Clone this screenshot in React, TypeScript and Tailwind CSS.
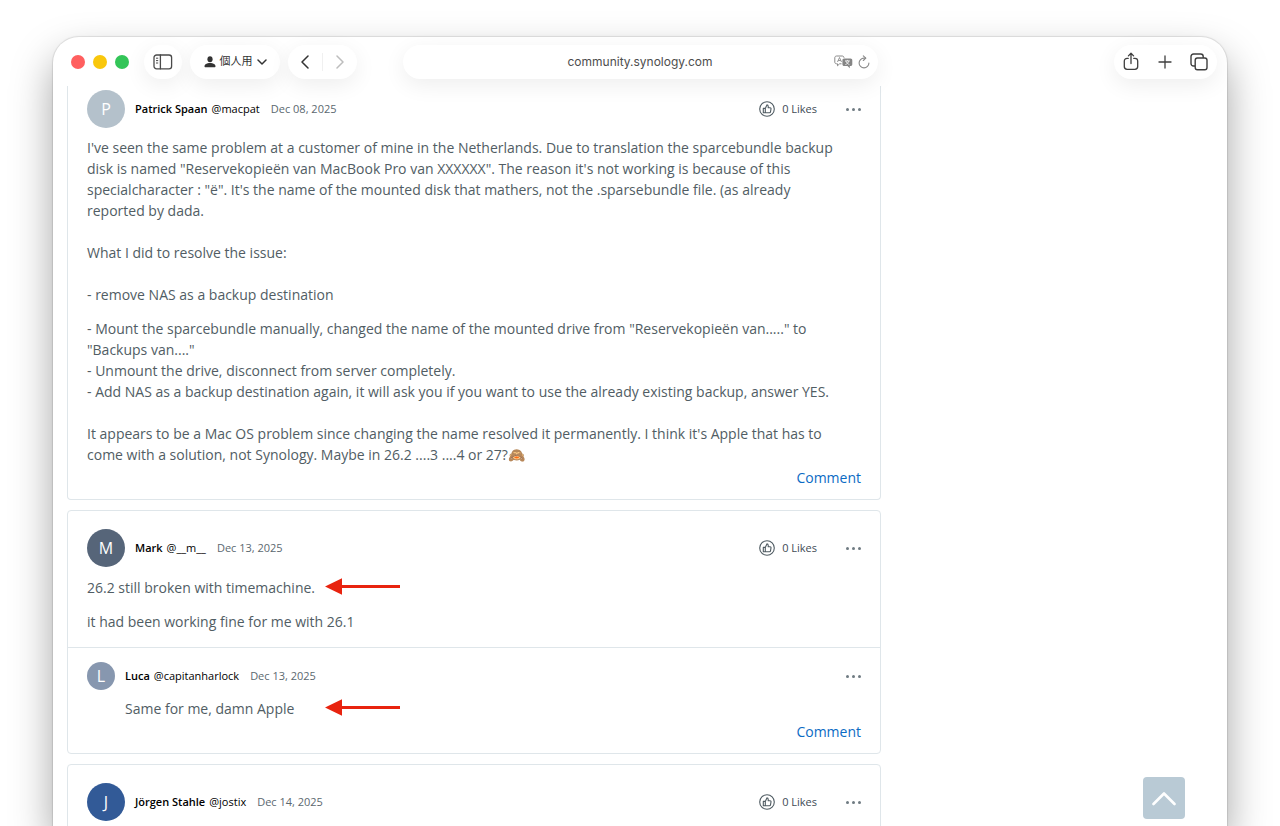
import React from 'react';

const PILL = 'flex items-center h-[34px] rounded-full bg-white shadow-[0_6px_22px_rgba(0,0,0,0.07)]';

const SidebarIcon: React.FC = () => (
    <svg width="20" height="16" viewBox="0 0 20 16" fill="none" stroke="#4a4a4a" strokeWidth="1.3" strokeLinecap="round">
        <rect x="1" y="1" width="17.6" height="13.8" rx="2.6" />
        <path d="M7.4 1v13.8" />
        <path d="M3.4 4.2h1.4M3.4 6.6h1.4M3.4 9h1.4" strokeWidth="1" />
    </svg>
);

const PersonIcon: React.FC = () => (
    <svg width="12" height="12" viewBox="0 0 12 12" fill="#333">
        <ellipse cx="6" cy="3.2" rx="2.6" ry="3" />
        <path d="M.5 10.2C.5 8.3 3 7 6 7s5.5 1.3 5.5 3.2c0 .7-.4 1-1 1h-9c-.6 0-1-.3-1-1z" />
    </svg>
);

const ChevronIcon: React.FC<{ d: string; className?: string; width: number; height: number; strokeWidth?: number }> = ({ d, className, width, height, strokeWidth = 1.5 }) => (
    <svg width={width} height={height} viewBox={`0 0 ${width} ${height}`} className={className} fill="none" stroke="currentColor" strokeWidth={strokeWidth} strokeLinecap="round" strokeLinejoin="round">
        <path d={d} />
    </svg>
);

const TranslateIcon: React.FC = () => (
    <svg width="19" height="14" viewBox="0 0 19 14" fill="none">
        <path d="M7.5 8.8H5.6L3.5 10.800V8.800H2.6C1.5 8.8.8 8.1.8 7V2.800C.8 1.700 1.5 1 2.6 1h5.600c1.100 0 1.800.7 1.800 1.800" stroke="#8a8a8a" strokeWidth="1" strokeLinejoin="round" />
        <path d="M3.500 7l2-4.500 2 4.500M4.200 5.500h2.600" stroke="#8a8a8a" strokeWidth=".9" />
        <path d="M10.200 3.600h6.300c1.100 0 1.800.7 1.800 1.800v3.800c0 1.100-.7 1.800-1.800 1.800h-.7v2.200L13.500 11h-3.300c-1.100 0-1.800-.7-1.800-1.800V5.400c0-1.100.7-1.800 1.800-1.800z" fill="#858585" />
        <path d="M11 5.900h4.800M13.400 4.900v1M14.900 6c-.5 1.600-1.800 2.900-3.500 3.600M11.900 6c.5 1.600 1.800 2.900 3.500 3.600" stroke="#fff" strokeWidth=".8" />
    </svg>
);

const ReloadIcon: React.FC = () => (
    <svg width="12" height="14" viewBox="0 0 12 14" fill="none" stroke="#8a8a8a" strokeWidth="1.1" strokeLinecap="round" strokeLinejoin="round">
        <path d="M7.600 3.100H6A4.900 4.900 0 1 0 10.900 8" />
        <path d="M5.300 .8l2.500 2.300-2.500 2.400" />
    </svg>
);

const ShareIcon: React.FC = () => (
    <svg width="16" height="19" viewBox="0 0 16 19" fill="none" stroke="#3f3f3f" strokeWidth="1.3" strokeLinecap="round" strokeLinejoin="round">
        <path d="M5.200 6.400H4.100C2.400 6.400 1.300 7.500 1.300 9.200v5.400c0 1.700 1.100 2.800 2.800 2.800h7.800c1.700 0 2.800-1.100 2.800-2.800V9.200c0-1.700-1.100-2.800-2.800-2.800h-1.100" />
        <path d="M8 11.500V1.500M5.400 3.900L8 1.300l2.600 2.600" />
    </svg>
);

const PlusIcon: React.FC = () => (
    <svg width="14" height="14" viewBox="0 0 14 14" fill="none" stroke="#3f3f3f" strokeWidth="1.3" strokeLinecap="round">
        <path d="M7 1v12M1 7h12" />
    </svg>
);

const TabsIcon: React.FC = () => (
    <svg width="18" height="18" viewBox="0 0 18 18" fill="none" stroke="#3f3f3f" strokeWidth="1.4" strokeLinejoin="round">
        <rect x="5.200" y="5" width="11.800" height="11.800" rx="2.200" />
        <path d="M5 13H3.600C2 13 1 12 1 10.400V3.600C1 2 2 1 3.600 1h7C12.200 1 13.200 2 13.200 3.600V5" />
    </svg>
);

const ThumbIcon: React.FC = () => (
    <svg width="16" height="16" viewBox="0 0 16 16" fill="none" stroke="#4f5b62" strokeWidth="1.1" strokeLinejoin="round">
        <circle cx="8" cy="8" r="7.3" />
        <path d="M4.300 7.400h2v4.300h-2zM6.300 7.400l1.600-3.500c.9 0 1.300.5 1.300 1.300v1.600h2c.6 0 .9.4.8 1l-.5 3c-.1.600-.5.900-1 .9H6.300" />
    </svg>
);

const Arrow: React.FC<{ className: string }> = ({ className }) => (
    <svg width="75" height="17" viewBox="0 0 75 17" className={`absolute top-px ${className}`} fill="#e8230f" aria-hidden="true">
        <path d="M0 8.500L17 .2v6.900h58v2.800H17v6.900z" />
    </svg>
);

interface PostHeaderProps {
    initial: string;
    color: string;
    name: string;
    handle: string;
    date: string;
    reply?: boolean;
}

const PostHeader: React.FC<PostHeaderProps> = ({ initial, color, name, handle, date, reply }) => (
    <div className="flex items-center text-[11px] leading-4">
        <div className={`flex shrink-0 items-center justify-center rounded-full text-white ${color} ${reply ? 'size-7' : 'size-[38px]'} text-base`}>
            {initial}
        </div>
        <div className="ml-[10px] flex text-black">
            <span className="font-semibold">{name}</span>
            <span className="ml-1">{handle}</span>
            <time className="ml-[11px] text-[#5b686f]">{date}</time>
        </div>
        <div className="ml-auto flex items-center gap-[29px]">
            {!reply && (
                <button className="flex items-center gap-[7px] text-[#414b55]">
                    <ThumbIcon />
                    0 Likes
                </button>
            )}
            <button aria-label="More" className="flex gap-[3px]">
                <span className="size-[3px] rounded-full bg-[#6f7b82]" />
                <span className="size-[3px] rounded-full bg-[#6f7b82]" />
                <span className="size-[3px] rounded-full bg-[#6f7b82]" />
            </button>
        </div>
    </div>
);

const CommentLink: React.FC = () => (
    <div className="mt-[2px] flex justify-end">
        <a href="#comment" className="text-[#0b6bc4]">Comment</a>
    </div>
);

const BrowserToolbar: React.FC = () => (
    <header className="relative z-10 grid h-[49px] shrink-0 grid-cols-[1fr_minmax(0,475px)_1fr] items-center font-['Inter','Noto_Sans_CJK_JP',sans-serif] text-xs">
        <div className="flex items-center pl-[18px]">
            <div className="mr-[15px] flex gap-2">
                <span className="size-[14px] rounded-full bg-[#ff5f5f]" />
                <span className="size-[14px] rounded-full bg-[#f9c70c]" />
                <span className="size-[14px] rounded-full bg-[#33c558]" />
            </div>
            <div className="flex gap-2">
                <button aria-label="Sidebar" className={`${PILL} w-[38px] justify-center`}><SidebarIcon /></button>
                <button className={`${PILL} w-[90px] justify-center gap-1 text-[11px] text-[#333]`}>
                    <PersonIcon />
                    個人用
                    <ChevronIcon d="M1 1l4 4 4-4" width={10} height={6} />
                </button>
                <div className={`${PILL} w-[69px]`}>
                    <button aria-label="Back" className="flex flex-1 justify-center text-[#333]"><ChevronIcon d="M8 1L2 7l6 6" width={10} height={14} /></button>
                    <span className="h-[18px] w-px bg-[#f0f0f0]" />
                    <button aria-label="Forward" className="flex flex-1 justify-center text-[#bdbdbd]"><ChevronIcon d="M2 1l6 6-6 6" width={10} height={14} /></button>
                </div>
            </div>
        </div>
        <div className={`${PILL} relative`}>
            <input aria-label="Address" defaultValue="community.synology.com" className="w-full bg-transparent text-center text-[#4d4d4d] outline-none" />
            <div className="absolute right-2 flex items-center gap-[5px]">
                <button aria-label="Translate"><TranslateIcon /></button>
                <button aria-label="Reload"><ReloadIcon /></button>
            </div>
        </div>
        <div className="flex justify-end pr-[10px]">
            <div className={`${PILL} w-[103px] justify-between px-[9px]`}>
                <button aria-label="Share"><ShareIcon /></button>
                <button aria-label="New tab"><PlusIcon /></button>
                <button aria-label="Tabs"><TabsIcon /></button>
            </div>
        </div>
    </header>
);

const App: React.FC = () => {
    return (
        <div className="h-screen overflow-hidden bg-white px-[53px] pt-[37px]">
            <div className="flex h-full flex-col rounded-t-[26px] bg-white shadow-[0_0_1px_1px_rgba(0,0,0,0.1),0_20px_42px_rgba(0,0,0,0.36)]">
                <BrowserToolbar />
                <main className="flex min-h-0 flex-1 flex-col gap-[10px] overflow-hidden px-[14px] font-['Open_Sans','Noto_Sans',sans-serif] text-sm leading-[21px] text-[#515d64]">
                    <article className="w-full max-w-[814px] shrink-0 rounded-b border border-t-0 border-[#dfe6ea] px-[19px] pt-1 pb-[11px]">
                        <PostHeader initial="P" color="bg-[#b4c1cb]" name="Patrick Spaan" handle="@macpat" date="Dec 08, 2025" />
                        <p className="mt-[9px] pr-4">
                            I've seen the same problem at a customer of mine in the Netherlands. Due to translation the sparcebundle backup disk is named "Reservekopieën van MacBook Pro van XXXXXX". The reason it's not working is because of this specialcharacter : "ë". It's the name of the mounted disk that mathers, not the .sparsebundle file. (as already reported by dada.
                            <br /><br />
                            What I did to resolve the issue:
                            <br /><br />
                            - remove NAS as a backup destination
                        </p>
                        <p className="mt-[13px] pr-4">
                            - Mount the sparcebundle manually, changed the name of the mounted drive from "Reservekopieën van....." to "Backups van...."
                            <br />
                            - Unmount the drive, disconnect from server completely.
                            <br />
                            - Add NAS as a backup destination again, it will ask you if you want to use the already existing backup, answer YES.
                            <br /><br />
                            It appears to be a Mac OS problem since changing the name resolved it permanently. I think it's Apple that has to come with a solution, not Synology. Maybe in 26.2 ....3 ....4 or 27?🙈
                        </p>
                        <CommentLink />
                    </article>

                    <article className="w-full max-w-[814px] shrink-0 rounded border border-[#dfe6ea]">
                        <div className="px-[19px] pt-[18px] pb-[15px]">
                            <PostHeader initial="M" color="bg-[#566579]" name="Mark" handle="@__m__" date="Dec 13, 2025" />
                            <p className="relative mt-[10px]">
                                26.2 still broken with timemachine.
                                <Arrow className="left-[238px]" />
                            </p>
                            <p className="mt-[13px]">it had been working fine for me with 26.1</p>
                        </div>
                        <div className="border-t border-[#dfe6ea] px-[19px] pt-[14px] pb-[11px]">
                            <PostHeader initial="L" color="bg-[#8797af]" name="Luca" handle="@capitanharlock" date="Dec 13, 2025" reply />
                            <p className="relative mt-2 ml-[38px]">
                                Same for me, damn Apple
                                <Arrow className="left-[200px]" />
                            </p>
                            <CommentLink />
                        </div>
                    </article>

                    <article className="w-full max-w-[814px] shrink-0 rounded border border-[#dfe6ea] px-[19px] pt-[18px] pb-10">
                        <PostHeader initial="J" color="bg-[#325a97]" name="Jörgen Stahle" handle="@jostix" date="Dec 14, 2025" />
                    </article>
                </main>
            </div>
            <button aria-label="Back to top" className="fixed right-[95px] bottom-[7px] flex size-[42px] items-center justify-center rounded bg-[#b9cad5] text-white">
                <ChevronIcon d="M1.500 13L12 2.500 22.500 13" width={24} height={15} strokeWidth={2.6} />
            </button>
        </div>
    );
};

export default App;
